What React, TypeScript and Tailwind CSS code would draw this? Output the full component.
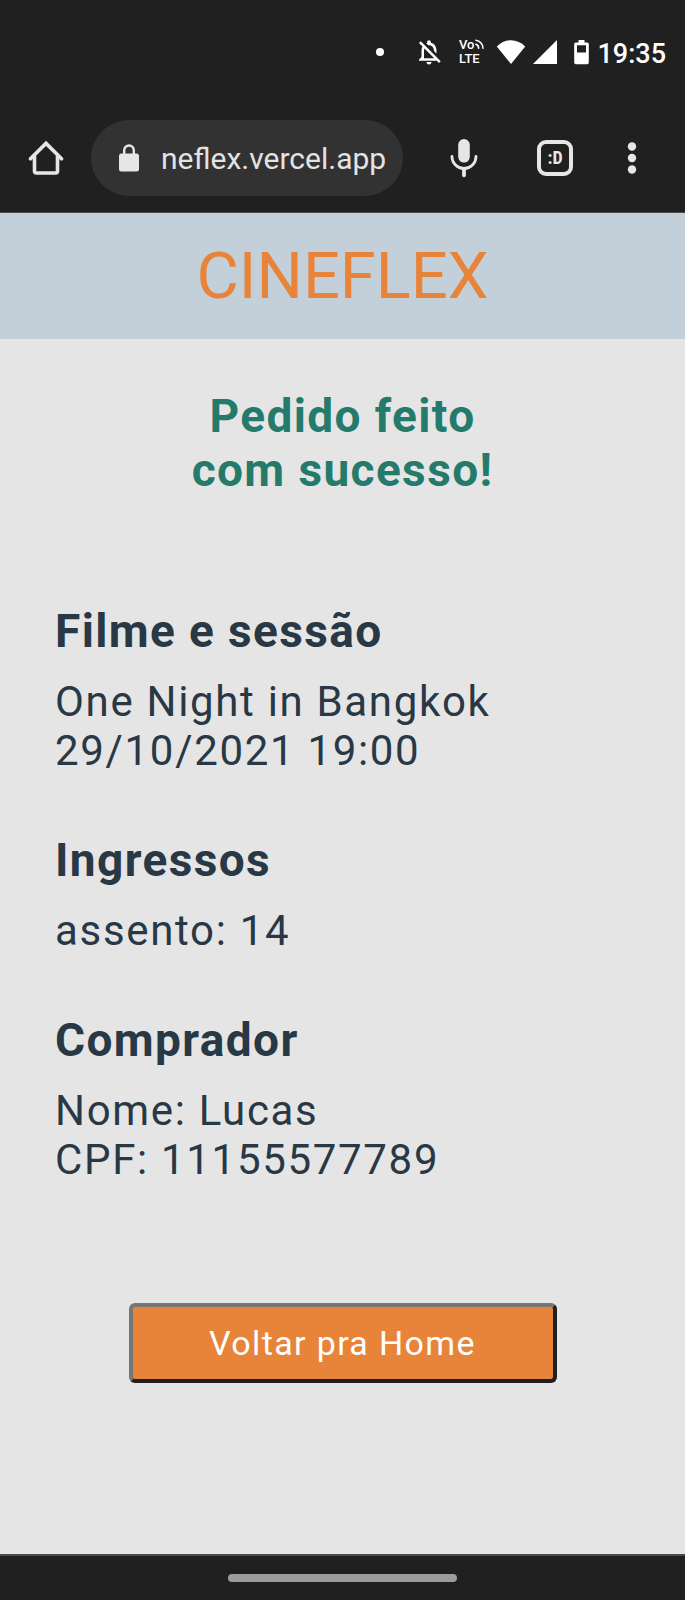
import { MdOutlineNotificationsOff } from "react-icons/md";

function VoLteIcon() {
  return (
    <svg width="28" height="36" viewBox="0 0 28 36" role="img" aria-label="VoLTE">
      <g fill="#ffffff" fontFamily="Roboto, sans-serif" fontWeight="500">
        <text x="1" y="15" fontSize="13">Vo</text>
        <text x="1" y="29" fontSize="13">LTE</text>
      </g>
      <g fill="none" stroke="#ffffff" strokeWidth="1.600" strokeLinecap="round">
        <path d="M18 10.300a4 4 0 0 1 2.600 4" />
        <path d="M18 6.300a8 8 0 0 1 7 8" />
      </g>
    </svg>
  );
}

function WifiIcon() {
  return (
    <svg width="30" height="26" viewBox="0 0 30 26" aria-hidden="true">
      <path fill="#ffffff" d="M15 25 0.800 7.400C4.600 3.600 9.600 1.300 15 1.300S25.400 3.600 29.200 7.400Z" />
    </svg>
  );
}

function SignalIcon() {
  return (
    <svg width="24" height="24" viewBox="0 0 24 24" aria-hidden="true">
      <path fill="#ffffff" d="M0 24 24 0V24Z" />
    </svg>
  );
}

function BatteryIcon() {
  return (
    <svg width="15" height="26" viewBox="0 0 15 26" aria-hidden="true">
      <path
        fill="#ffffff"
        fillRule="evenodd"
        d="M4.500 1H10.500V3.400H13.200A1.600 1.600 0 0 1 14.800 5V23.600A1.600 1.600 0 0 1 13.200 25.200H1.800A1.600 1.600 0 0 1 .2 23.600V5A1.600 1.600 0 0 1 1.800 3.400H4.500ZM3 6.200V13.500H12V6.200Z"
      />
    </svg>
  );
}

function StatusBar() {
  return (
    <div className="flex h-[104px] items-center justify-end pr-[19px] text-white">
      <span className="mr-[30px] size-2 rounded-full bg-white" />
      <MdOutlineNotificationsOff className="mr-[14px] size-[30px]" aria-hidden="true" />
      <span className="mr-[10px]"><VoLteIcon /></span>
      <span className="mr-[7px]"><WifiIcon /></span>
      <span className="mr-[17px]"><SignalIcon /></span>
      <span className="mr-[8px]"><BatteryIcon /></span>
      <time className="pt-1 text-[27px] leading-8 font-medium">19:35</time>
    </div>
  );
}

function Toolbar() {
  return (
    <div className="flex h-[109px] items-center border-b border-[#4a4b4c] pr-[48px] pl-[28px]">
      <button type="button" aria-label="Home">
        <svg width="36" height="36" viewBox="0 0 36 36" fill="none" stroke="#e6e6e6" strokeWidth="3.600">
          <path d="M2.500 18.800 18 3.400 33.500 18.800" strokeLinecap="round" />
          <path d="M6.500 16V31a2 2 0 0 0 2 2H27.500a2 2 0 0 0 2-2V16" />
        </svg>
      </button>
      <div className="ml-[27px] flex h-[76px] flex-1 items-center rounded-full bg-[#323232] pr-3 pl-[28px]">
        <svg width="20" height="28" viewBox="0 0 20 28" aria-hidden="true">
          <rect x="0" y="9.500" width="20" height="18" rx="2.500" fill="#e6e6e6" />
          <path d="M5.200 11V6.300a4.800 4.800 0 0 1 9.600 0V11" fill="none" stroke="#e6e6e6" strokeWidth="2.400" />
        </svg>
        <span className="ml-[22px] pt-0.5 text-[30px] leading-9 whitespace-nowrap text-[#e3e3e3]">
          neflex.vercel.app
        </span>
      </div>
      <button type="button" aria-label="Pesquisa por voz" className="ml-[47px]">
        <svg width="28" height="40" viewBox="0 0 28 40" aria-hidden="true">
          <rect x="8.200" y="1" width="11.600" height="23.600" rx="5.800" fill="#e6e6e6" />
          <g fill="none" stroke="#e6e6e6" strokeLinecap="round">
            <path d="M2 18.500a12 12 0 0 0 24 0" strokeWidth="2.800" />
            <path d="M14 31V37.300" strokeWidth="3.800" />
          </g>
        </svg>
      </button>
      <button
        type="button"
        aria-label="Abas abertas :D"
        className="ml-[59px] flex size-9 items-center justify-center rounded-[9px] border-4 border-[#e6e6e6] font-['Liberation_Sans_Narrow','Roboto_Condensed',Roboto,sans-serif] text-[18px] leading-5 font-bold text-[#e6e6e6]"
      >
        :D
      </button>
      <button type="button" aria-label="Mais opções" className="ml-[54px]">
        <svg width="10" height="34" viewBox="0 0 10 34" fill="#e6e6e6" aria-hidden="true">
          <circle cx="5" cy="5.500" r="4.200" />
          <circle cx="5" cy="17" r="4.200" />
          <circle cx="5" cy="28.500" r="4.200" />
        </svg>
      </button>
    </div>
  );
}

function Detail({ title, lines }: { title: string; lines: string[] }) {
  return (
    <section>
      <h3 className="text-[46px] leading-[54px] font-bold tracking-[0.03em]">{title}</h3>
      <div className="mt-[19px] text-[42px] leading-[49px] tracking-[0.04em]">
        {lines.map((line) => (
          <p key={line}>{line}</p>
        ))}
      </div>
    </section>
  );
}

export default function App() {
  return (
    <div className="flex min-h-screen flex-col bg-[#e5e5e5] font-['Roboto',sans-serif]">
      <div className="bg-[#202020]">
        <StatusBar />
        <Toolbar />
      </div>

      <header className="flex h-[126px] items-center justify-center bg-[#c3cfd9]">
        <h1 className="text-[65px] leading-[76px] text-[#e8833a]">CINEFLEX</h1>
      </header>

      <main className="flex flex-1 flex-col">
        <h2 className="mt-[50px] text-center text-[46px] leading-[54px] font-bold tracking-[0.03em] text-[#247a6b]">
          Pedido feito
          <br />
          com sucesso!
        </h2>
        <div className="mt-[107px] flex flex-col gap-[58px] px-[55px] text-[#293845]">
          <Detail title="Filme e sessão" lines={["One Night in Bangkok", "29/10/2021 19:00"]} />
          <Detail title="Ingressos" lines={["assento: 14"]} />
          <Detail title="Comprador" lines={["Nome: Lucas", "CPF: 11155577789"]} />
        </div>
        <button
          type="button"
          className="mt-[119px] mb-10 h-20 w-[428px] self-center rounded-md border-4 border-t-[#767676] border-r-[#202020] border-b-[#202020] border-l-[#767676] bg-[#e8833a] text-[34px] leading-10 tracking-[0.04em] text-white"
        >
          Voltar pra Home
        </button>
      </main>

      <footer className="flex h-[46px] items-center justify-center border-t-2 border-[#4a4a4a] bg-[#202020]">
        <div className="h-2 w-1/3 rounded-full bg-[#9c9c9c]" />
      </footer>
    </div>
  );
}
